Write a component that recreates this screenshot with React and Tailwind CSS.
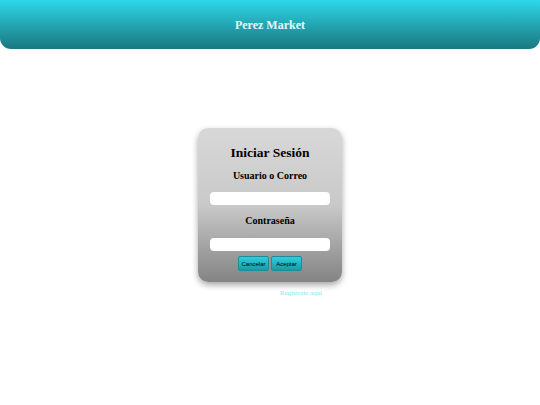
export default function App() {
  return (
    <div className="min-h-[405px] w-full bg-white" style={{ fontFamily: '"Liberation Serif", serif' }}>
      <header className="flex h-[49px] items-center justify-center rounded-b-[11px] bg-gradient-to-b from-[#2dd8ea] to-[#1a7880]">
        <h1 className="text-[12px] font-bold leading-none text-[#e3f8fa]">Perez Market</h1>
      </header>

      <main className="flex flex-col items-center pt-[79px]">
        <div className="flex w-[144px] flex-col items-center rounded-[10px] bg-gradient-to-b from-[#d8d8d8] via-[#c9c9c9] to-[#848484] pb-[11px] pt-[16px] shadow-[0_3px_6px_rgba(0,0,0,0.35)]">
          <h2 className="text-[13.5px] font-bold leading-[18px] text-black">Iniciar Sesión</h2>
          <label className="mt-[7px] text-[10px] font-bold leading-[13px] text-black">Usuario o Correo</label>
          <input type="text" className="mt-[10px] h-[13px] w-[120px] rounded-[4px] bg-white outline-none" />
          <label className="mt-[9px] text-[10px] font-bold leading-[13px] text-black">Contraseña</label>
          <input type="password" className="mt-[11px] h-[13px] w-[120px] rounded-[4px] bg-white outline-none" />
          <div className="mt-[5px] flex gap-[2px]">
            <button
              className="flex h-[15px] w-[31px] items-center justify-center rounded-[2px] border border-[#1a8f99] bg-gradient-to-b from-[#30cede] to-[#1b9aa6] text-[6px] leading-none text-black"
              style={{ fontFamily: '"Liberation Sans", sans-serif' }}
            >
              Cancelar
            </button>
            <button
              className="flex h-[15px] w-[31px] items-center justify-center rounded-[2px] border border-[#1a8f99] bg-gradient-to-b from-[#30cede] to-[#1b9aa6] text-[6px] leading-none text-black"
              style={{ fontFamily: '"Liberation Sans", sans-serif' }}
            >
              Aceptar
            </button>
          </div>
        </div>
        <div className="mt-[6px] flex w-[144px] justify-end pr-[20px]">
          <a className="text-[7px] leading-[10px] text-[#7de8f5]">Regístrate aquí</a>
        </div>
      </main>
    </div>
  );
}
